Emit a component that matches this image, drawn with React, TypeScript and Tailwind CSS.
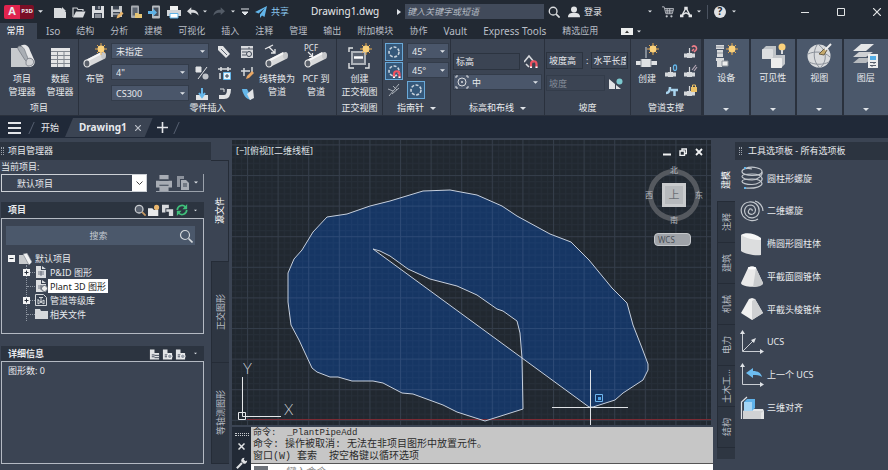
import type { ReactNode } from "react";

type IconProps = { className?: string; box?: string; children: ReactNode };

function Icon({ className = "size-3.5", box = "0 0 14 14", children }: IconProps) {
  return (
    <svg viewBox={box} className={`shrink-0 ${className}`} fill="none" aria-hidden="true">
      {children}
    </svg>
  );
}

function Caret({ className = "w-1.5" }: { className?: string }) {
  return (
    <svg viewBox="0 0 6 3" className={`h-[3px] shrink-0 ${className}`} aria-hidden="true">
      <path d="M0 0h6L3 3z" fill="#dfe3e8" />
    </svg>
  );
}

function Sun() {
  return (
    <g>
      <path
        d="M20 0v12M14 6h12M16 2l8 8M24 2l-8 8"
        stroke="#e8a94c"
        strokeWidth="1"
      />
      <circle cx="20" cy="6" r="3.4" fill="#fbd27c" />
    </g>
  );
}

function Pipe() {
  return (
    <g>
      <path d="M7 20L22 12.500" stroke="#d9dadb" strokeWidth="7" />
      <path d="M6 17.500L20.500 10" stroke="#f6f6f6" strokeWidth="2" />
      <ellipse cx="22.500" cy="12.500" rx="2.500" ry="3.500" fill="#c4c6c9" />
      <ellipse cx="6" cy="20.500" rx="3" ry="3.500" fill="#5a606a" stroke="#e6e6e6" strokeWidth="1.2" />
    </g>
  );
}

/* ---------- title bar ---------- */

const quickActions: { label: string; art: ReactNode }[] = [
  { label: "新建", art: <path d="M1 3h7l5 4v6H1zM9 2l4 4H9z" fill="#d8dadd" /> },
  {
    label: "打开",
    art: (
      <>
        <path d="M1 12V3h4l1 1.500h5V6" stroke="#cfd2d6" strokeWidth="1.200" />
        <path d="M1 12.500L4 6.500h9.500L11 12.500z" fill="#d8dadd" />
      </>
    ),
  },
  {
    label: "保存",
    art: (
      <>
        <path d="M1 1h12v12H1z" fill="#dcdee1" />
        <path d="M4 1h6v4H4zM3 8h8v5H3z" fill="#3b4350" />
        <path d="M4 10h6M4 12h6M8 1v3" stroke="#dcdee1" />
      </>
    ),
  },
  {
    label: "另存为",
    art: (
      <>
        <path d="M1 1h11v11H1z" fill="#c4c7cb" />
        <path d="M3 1h6v3.500H3zM3 7h7v5H3z" fill="#3b4350" />
        <path d="M3 9h6" stroke="#dcdee1" />
        <path d="M6.500 13.500l1-3 4-4 2 2-4 4z" fill="#e9b66d" />
      </>
    ),
  },
  {
    label: "从移动设备打开",
    art: (
      <>
        <rect x="2" y="0.500" width="8" height="12.500" rx="1" fill="#a9adb3" />
        <path d="M3.500 2.500h5v8h-5z" fill="#5c6470" />
        <path d="M6 13V8h3l1 1h3v4z" fill="#e6c574" />
      </>
    ),
  },
  {
    label: "保存到移动设备",
    art: (
      <>
        <rect x="4" y="0.500" width="8" height="13" rx="1" fill="#b9bdc2" />
        <path d="M5.500 2.500h5v8.500h-5z" fill="#47505e" />
        <path d="M0 6h5V3.500L9 7.500l-4 4V9H0z" fill="#5fb2e6" />
      </>
    ),
  },
  {
    label: "打印",
    art: (
      <>
        <path d="M3 1h8v4H3z" fill="#f0f1f2" />
        <path d="M0 5h14v6H0z" fill="#d2d5d9" />
        <path d="M3 8.500h8V13H3z" fill="#fff" stroke="#5fb2e6" />
      </>
    ),
  },
];

function TitleBar() {
  return (
    <header className="flex h-[23px] shrink-0 items-center bg-[#222933]">
      <button aria-label="应用程序菜单" className="ml-1 flex h-3.5 w-[30px] shrink-0 items-center overflow-hidden rounded-xs bg-[#7b0f26]">
        <span className="flex h-full w-4 items-center justify-center bg-[#e0244e] text-[11px] font-bold">A</span>
        <span className="flex-1 text-[6px] font-bold">P3D</span>
      </button>
      <Caret className="ml-1 w-[5px]" />
      <div className="ml-2.5 flex items-center gap-[5px]">
        {quickActions.map((action) => (
          <button key={action.label} aria-label={action.label}>
            <Icon>{action.art}</Icon>
          </button>
        ))}
      </div>
      <button aria-label="放弃" className="ml-1.5">
        <Icon className="h-3.5 w-3">
          <path d="M0 6l5-4.500V4.500c5 0 8 2 8.500 7C11.500 8.500 9 8 5 8v2.500z" fill="#d8dadd" />
        </Icon>
      </button>
      <Caret className="ml-1 w-1" />
      <button aria-label="重做" className="ml-1.5">
        <Icon className="h-3.5 w-3">
          <path d="M14 6L9 1.500V4.500c-5 0-8 2-8.500 7C2.500 8.500 5 8 9 8v2.500z" fill="#535b66" />
        </Icon>
      </button>
      <Caret className="ml-1.5 w-1" />
      <button aria-label="自定义快速访问工具栏" className="ml-1.5">
        <Icon className="size-2" box="0 0 8 8">
          <path d="M0 1h8M1 4h6L4 7z" stroke="#dfe3e8" fill="#dfe3e8" />
        </Icon>
      </button>
      <button className="ml-1.5 flex items-center gap-1 text-[9px] text-[#8ac7ef]">
        <Icon className="size-3" box="0 0 12 12">
          <path d="M12 0L0 6l3.500 1.500L10 2 5 8.500V12l2-2.500 2.500 1.500z" fill="#62b5ea" />
        </Icon>
        共享
      </button>
      <h1 className="ml-[22px] text-[10px]">Drawing1.dwg</h1>
      <Icon className="ml-auto h-1.5 w-1" box="0 0 4 6">
        <path d="M0 0l4 3-4 3z" fill="#dfe3e8" />
      </Icon>
      <input
        aria-label="搜索"
        placeholder="键入关键字或短语"
        className="ml-1 h-[15px] w-[139px] bg-[#414a5a] px-0.5 text-[9px] italic placeholder:text-[#b4bac3]"
      />
      <button aria-label="查找" className="ml-1">
        <Icon className="size-3">
          <circle cx="6" cy="6" r="4.500" stroke="#d8dadd" strokeWidth="1.600" />
          <path d="M9.500 9.500L13.500 13.500" stroke="#d8dadd" strokeWidth="2" />
        </Icon>
      </button>
      <button className="ml-2 flex items-center gap-1 text-[9px]">
        <Icon className="size-3">
          <circle cx="7" cy="4" r="3.500" fill="#e2e4e6" />
          <path d="M0 13c0-4 3-5 7-5s7 1 7 5z" fill="#e2e4e6" />
        </Icon>
        登录
      </button>
      <Caret className="ml-[46px] w-1" />
      <button aria-label="应用商店" className="ml-2.5">
        <Icon className="size-3">
          <path d="M0 1h2.500l2 8h7.500l1.500-6H3.500M4 5h9M5 7h7M6 3v6M9 3v6" stroke="#c2c6cb" />
          <circle cx="5.500" cy="12" r="1.300" fill="#c2c6cb" />
          <circle cx="11" cy="12" r="1.300" fill="#c2c6cb" />
        </Icon>
      </button>
      <button aria-label="Autodesk" className="ml-1.5">
        <Icon className="size-3">
          <path d="M7 2L2 11.500M7 2l5 9.500M3 10l4-2 4 2" stroke="#e2e4e6" strokeWidth="1.600" />
          <path d="M5 1h4v3H5zM0 10h4v3H0zM10 10h4v3h-4z" fill="#e2e4e6" />
        </Icon>
      </button>
      <Caret className="ml-[5px] w-1" />
      <span className="mx-1.5 h-3.5 w-px bg-[#4a525f]" />
      <button aria-label="帮助" className="flex size-3 items-center justify-center rounded-full bg-[#dfe1e4] text-[10px] font-bold text-[#222933]">
        ?
      </button>
      <Caret className="ml-1.5 w-1" />
      <div className="ml-[65px] flex items-center gap-7 pr-[7px]">
        <button aria-label="最小化">
          <Icon className="size-2" box="0 0 8 8">
            <path d="M0 4.500h8" stroke="#e2e4e6" />
          </Icon>
        </button>
        <button aria-label="最大化">
          <Icon className="size-2" box="0 0 8 8">
            <path d="M.5.5h7v7h-7z" stroke="#e2e4e6" />
          </Icon>
        </button>
        <button aria-label="关闭">
          <Icon className="size-2" box="0 0 8 8">
            <path d="M0 0l8 8M8 0L0 8" stroke="#e2e4e6" strokeWidth="1.200" />
          </Icon>
        </button>
      </div>
    </header>
  );
}

/* ---------- ribbon ---------- */

const ribbonTabs = ["Iso", "结构", "分析", "建模", "可视化", "插入", "注释", "管理", "输出", "附加模块", "协作", "Vault", "Express Tools", "精选应用"];

function RibbonTabs() {
  return (
    <nav className="flex h-4 shrink-0 items-center gap-[15px] bg-[#222933] text-[#b9bec6]">
      <button className="h-full w-[37px] shrink-0 bg-[#3b4453] pr-1.5 text-[9px] text-white">常用</button>
      <div className="-ml-1.5 flex items-center gap-4 whitespace-nowrap text-[9px]">
        {ribbonTabs.map((tab) => (
          <button key={tab} className={/^[A-Z]/.test(tab) ? "text-[10px]" : ""}>
            {tab}
          </button>
        ))}
      </div>
      <button aria-label="最小化功能区" className="ml-2 flex items-center gap-1">
        <Icon className="h-[7px] w-3" box="0 0 12 7">
          <path d="M0 0h12v7H0z" fill="#eceded" />
          <path d="M4 5h4L6 2.500z" fill="#333" />
        </Icon>
        <Caret className="w-1" />
      </button>
    </nav>
  );
}

function Panel({ title, caret, className, children }: { title: string; caret?: boolean; className: string; children: ReactNode }) {
  return (
    <section className={`flex shrink-0 flex-col border-r border-[#2a313d] ${className}`}>
      <div className="flex h-[62px] pt-1">{children}</div>
      <h2 className="flex h-3.5 items-center justify-center gap-1.5 whitespace-nowrap text-[9px]">
        {title}
        {caret && <Caret />}
      </h2>
    </section>
  );
}

function BigButton({ lines, className, children }: { lines: string[]; className: string; children: ReactNode }) {
  return (
    <button className={`flex shrink-0 flex-col items-center whitespace-nowrap text-[9px] leading-[13px] ${className}`}>
      <Icon className="mb-[3px] h-[26px] w-7" box="0 0 28 26">
        {children}
      </Icon>
      {lines.map((line) => (
        <span key={line}>{line}</span>
      ))}
    </button>
  );
}

function Drop({ label, value, className, indent = "pl-1" }: { label: string; value: string; className: string; indent?: string }) {
  return (
    <span className={`relative block h-4 shrink-0 ${className}`}>
      <select aria-label={label} className={`block h-full w-full appearance-none border border-[#333c4a] bg-[#4a566a] text-[9px] leading-none ${indent}`}>
        <option>{value}</option>
      </select>
      <Caret className="pointer-events-none absolute top-[7px] right-1 w-[5px]" />
    </span>
  );
}

function Tool({ label, on, children }: { label: string; on?: boolean; children: ReactNode }) {
  return (
    <button
      aria-label={label}
      className={`flex size-[18px] shrink-0 items-center justify-center ${on ? "border border-[#6aa9d8] bg-[#35587a]" : ""}`}
    >
      <Icon>{children}</Icon>
    </button>
  );
}

function CompassRing() {
  return <circle cx="7" cy="7" r="5" stroke="#c9d3dd" strokeWidth="1.600" strokeDasharray="3 1.500" />;
}

function Magnet() {
  return (
    <g>
      <path d="M7 13.500V10a2.500 2.500 0 0 1 5.500 0v3.500" stroke="#ee5261" strokeWidth="2.200" />
      <path d="M6 12.500h2v1.500H6zM11.500 12.500h2v1.500h-2z" fill="#fff" />
    </g>
  );
}

function Support({ badge }: { badge: ReactNode }) {
  return (
    <g>
      <path d="M0 8.500h3V8h5v.5h3v4H8v.5H3v-.5H0z" fill="#d5d8db" />
      <path d="M5.500 8V3" stroke="#d5d8db" strokeWidth="1.200" />
      {badge}
    </g>
  );
}

function Ribbon() {
  return (
    <div className="flex h-[77px] shrink-0 overflow-hidden border-b border-[#2a313d] bg-[#3b4453]">
      <Panel title="项目" className="w-[79px]">
        <BigButton lines={["项目", "管理器"]} className="ml-0.5 w-10">
          <path d="M3 5h9l11 19H3z" fill="#c7cacd" />
          <path d="M13 2.500c5-2 8 1 9 5l4.500 10c1 4-2 6.500-5 6.500z" fill="#e6e7e8" />
          <path d="M12 3c5 1 5 6 7 10s1 7-2 4L10 6c-.5-2 0-3 2-3z" fill="#a9aeb4" stroke="#6e747d" strokeWidth=".7" />
          <path d="M18 19c0-4 5-5 7-2s-1 6-4 6-3-2-3-4z" fill="#d0d2d5" stroke="#6e747d" strokeWidth=".8" />
        </BigButton>
        <BigButton lines={["数据", "管理器"]} className="w-9">
          <path d="M5 5h19v19H5z" fill="#e4e5e6" />
          <path d="M5 8.500h19M5 12.500h19M5 16.500h19M5 20.500h19M11.500 8v16M18 8v16" stroke="#81878f" />
        </BigButton>
      </Panel>

      <Panel title="零件插入" className="w-[258px]">
        <BigButton lines={["布管"]} className="w-8">
          <Pipe />
          <Sun />
        </BigButton>
        <div className="flex flex-col gap-[3px]">
          <div className="flex gap-1.5">
            <Drop label="线号" value="未指定" className="w-[98px]" />
            <div className="flex gap-[5px]">
              <Tool label="标记">
                <path d="M1 1h5l7 8-4 4-8-8z" fill="#e1e3e5" />
                <path d="M4 4l6 6" stroke="#596270" />
              </Tool>
              <Tool label="线号表">
                <path d="M1 1h12v12H1z" fill="#d8dadd" />
                <path d="M1 4h12M2 7h5M2 10h4M9 2v2" stroke="#4a5260" />
                <circle cx="9" cy="9" r="2.500" stroke="#3b4453" />
              </Tool>
            </div>
          </div>
          <div className="flex gap-1">
            <Drop label="尺寸" value={'4"'} className="w-[78px]" />
            <div className="flex gap-[5px]">
              <Tool label="连接">
                <path d="M1 1h5v5H1zM12 1L3 13" fill="#e1e3e5" stroke="#e1e3e5" />
                <circle cx="10.500" cy="10.500" r="3" fill="#c0c4c9" />
              </Tool>
              <Tool label="装配">
                <path d="M0 3h13M3 1v4M10 1v4M2 7v6" stroke="#d8dadd" strokeWidth="1.600" />
                <path d="M5.500 6.500h7v7h-7z" fill="#e8f4fb" stroke="#65b7ea" />
                <path d="M9 8v4M7 10h4" stroke="#3b4453" />
              </Tool>
              <Tool label="编辑零件">
                <path d="M0 5h9M3 2v8M11 1v7" stroke="#d8dadd" strokeWidth="1.500" />
                <path d="M5 13l1-3 5-5 2 2-5 5z" fill="#e9a765" />
              </Tool>
            </div>
          </div>
          <div className="flex gap-1">
            <Drop label="等级库" value="CS300" className="w-[78px]" />
            <div className="flex gap-[5px]">
              <Tool label="支管">
                <path d="M1 8h12v5H1z" fill="#e1e3e5" />
                <path d="M7 1v8M4 6l3 4 3-4" stroke="#65b7ea" strokeWidth="2" />
              </Tool>
              <Tool label="弯头">
                <path d="M1 10h5c3 0 5-2 5-8" stroke="#e1e3e5" strokeWidth="4" />
                <path d="M2 2h4v3" stroke="#e1e3e5" />
              </Tool>
              <Tool label="斜接">
                <path d="M1 2h5l4 8v3C5 12 2 8 1 2z" fill="#65b7ea" />
                <path d="M6 7l6-5 1 9-4 2z" fill="#e1e3e5" />
              </Tool>
            </div>
          </div>
        </div>
        <BigButton lines={["线转换为", "管道"]} className="w-10">
          <Pipe />
          <path d="M2 6l8-4M6 4l6 6M12 6v4H8" stroke="#e5e6e8" strokeWidth="1.300" />
        </BigButton>
        <BigButton lines={["PCF 到", "管道"]} className="w-[38px]">
          <Pipe />
          <path d="M6 9l4 4M10.500 10v3.500H7" stroke="#e5e6e8" strokeWidth="1.200" />
          <text x="2" y="8" fontSize="8" fill="#e5e6e8">PCF</text>
        </BigButton>
      </Panel>

      <Panel title="正交视图" className="w-[46px]">
        <BigButton lines={["创建", "正交视图"]} className="w-[45px]">
          <path d="M3 9V5h4M3 20v5h5M19 25h4v-5" stroke="#e1e3e5" strokeWidth="1.400" />
          <path d="M5 8h15v14H5z" fill="#aeb3b9" />
          <path d="M7 10h11v10H7z" fill="#59616e" />
          <path d="M8 14.500h9" stroke="#fff" strokeWidth="2.500" />
          <Sun />
        </BigButton>
      </Panel>

      <Panel title="指南针" caret className="w-[68px]">
        <div className="flex flex-col gap-px pl-0.5">
          <div className="flex gap-1">
            <Tool label="切换指南针" on>
              <CompassRing />
            </Tool>
            <Drop label="指南针增量" value="45°" className="w-[42px]" />
          </div>
          <div className="flex gap-1">
            <Tool label="指南针捕捉" on>
              <CompassRing />
              <Magnet />
            </Tool>
            <Drop label="公差" value="45°" className="w-[42px]" />
          </div>
          <div className="flex gap-1">
            <Tool label="平面">
              <path d="M2 13L12 1M1 6l5 2M6 3l4 4M5 11l7-6" stroke="#aab0b8" />
            </Tool>
            <Tool label="旋转指南针" on>
              <CompassRing />
            </Tool>
          </div>
        </div>
      </Panel>

      <Panel title="标高和布线" caret className="w-[94px]">
        <div className="flex w-full flex-col gap-1 px-0.5 pt-[9px]">
          <div className="flex items-center justify-between pr-0.5">
            <input aria-label="标高" defaultValue="标高" className="h-[17px] w-[67px] border border-[#2c3440] bg-[#3b4453] px-0.5 text-[9px]" />
            <Tool label="标高捕捉">
              <path d="M0 8l5-6 5 6M2 10l3 3" stroke="#d8dadd" strokeWidth="1.600" />
              <Magnet />
            </Tool>
          </div>
          <div className="relative">
            <Drop label="布线对齐" value="中" className="w-[89px]" indent="pl-[18px]" />
            <Icon className="pointer-events-none absolute top-px left-0.5 size-3.5">
              <circle cx="7" cy="7" r="4" stroke="#d8dadd" />
              <path d="M1 3V1h2M11 1h2v2M13 11v2h-2M3 13H1v-2M7 6v2M6 7h2" stroke="#d8dadd" />
            </Icon>
          </div>
        </div>
      </Panel>

      <Panel title="坡度" className="w-[86px]">
        <div className="flex flex-col gap-[5px] pt-[9px] pl-px text-[9px]">
          <div className="flex items-center gap-[3px]">
            <input aria-label="坡度高" defaultValue="坡度高" className="h-[17px] w-[37px] border border-[#2c3440] bg-[#3b4453] px-0.5" />
            <span>:</span>
            <input aria-label="水平长度" defaultValue="水平长度" className="h-[17px] w-[37px] border border-[#2c3440] bg-[#3b4453] px-px" />
          </div>
          <div className="flex items-center gap-0.5">
            <input aria-label="坡度" disabled defaultValue="坡度" className="h-4 w-[59px] border border-[#333c4a] bg-[#3b4453] px-0.5 text-[#838b97]" />
            <Tool label="设置坡度">
              <path d="M0 3l6 5v5H0zM7 9l5 4H7z" fill="#e1e3e5" />
              <circle cx="10.500" cy="5.500" r="3" fill="#7cc9cf" />
            </Tool>
          </div>
        </div>
      </Panel>

      <Panel title="管道支撑" className="w-[71px]">
        <BigButton lines={["创建"]} className="w-8">
          <path d="M13 15V4" stroke="#9da3ab" strokeWidth="1.500" />
          <path d="M3 18h5v-2h10v2h6v4h-6v2H8v-2H3z" fill="#dfe1e3" />
          <path d="M8 16v8M18 16v8" stroke="#868c95" />
          <Sun />
        </BigButton>
        <div className="grid grid-cols-2 content-start gap-px">
          <span />
          <Tool label="附着">
            <Support badge={<path d="M8 2a2.500 2.500 0 0 1 4 3l-2 2M8 6l2-2" stroke="#ee7f8a" strokeWidth="1.600" />} />
          </Tool>
          <Tool label="添加">
            <Support badge={<rect x="8.500" y="1" width="3" height="5.500" rx="1.500" stroke="#65b7ea" strokeWidth="1.300" />} />
          </Tool>
          <Tool label="分离">
            <Support badge={<path d="M8 6l4-5M10 7l3-4" stroke="#b5a8b6" strokeWidth="1.200" />} />
          </Tool>
          <Tool label="转换">
            <path d="M1 10c3 0 4-2 4-6M6 7h7M9.500 7v6" stroke="#a9d4ee" strokeWidth="2.500" />
          </Tool>
          <Tool label="锁定">
            <Support
              badge={
                <>
                  <path d="M7 4h6v5H7z" fill="#eec266" />
                  <path d="M8.500 4V2h3v2" stroke="#eec266" />
                </>
              }
            />
          </Tool>
        </div>
      </Panel>

      <div className="flex flex-1 gap-0.5 bg-[#2a313d] pl-0.5">
        <Collapsed label="设备">
          <path d="M4 2h8v4H4zM5 7h6v7H5zM4 15h8v3H4zM5 18h5v6H5z" fill="#d9dbdd" />
          <path d="M10 18h6v5h-6zM4 4h8M5 10h6" fill="#eee" stroke="#8d939b" />
          <Sun />
        </Collapsed>
        <Collapsed label="可见性">
          <path d="M3 7l4-4h10v9l-4 4H3z" fill="#bfc3c7" />
          <rect x="3" y="6" width="11" height="10" rx="1" fill="#dcdee0" />
          <path d="M12 16l4-4h10v9l-4 4H12z" fill="#c3c6ca" />
          <rect x="12" y="15" width="11" height="10" rx="1" fill="#ececec" />
          <circle cx="23" cy="4" r="3.500" fill="#fbd27c" />
          <path d="M22 7h2v4h-2z" fill="#d9dbdd" />
        </Collapsed>
        <Collapsed label="视图">
          <circle cx="14" cy="13" r="11.500" fill="#d9dbdd" />
          <path d="M3 11c6-3 16-3 22 3M4 19c6 3 14 3 20 0M12 2c-4 6-4 16 2 22M14 2c8 6 8 16 2 22" stroke="#8b919a" />
          <path d="M14 11l5-5 3 1-3 5z" fill="#c4a96c" stroke="#6b6048" />
          <path d="M20 7l6-6" stroke="#eee" strokeWidth="2" />
        </Collapsed>
        <Collapsed label="图层">
          <path d="M1 8L9 1h13l-8 7z" fill="#e5e6e7" />
          <path d="M1 14l6-5h14l-7 5z" fill="#cfd1d4" />
          <path d="M1 20l6-5h14l-7 5z" fill="#b7bbbf" />
          <path d="M16 11h10v14H16z" fill="#eceded" />
          <path d="M18 13h6v4h-6z" fill="#55aee6" />
          <path d="M18 19.500h6M18 22.500h6M22 19v2M20 22v2" stroke="#59616e" />
        </Collapsed>
      </div>
    </div>
  );
}

function Collapsed({ label, children }: { label: string; children: ReactNode }) {
  return (
    <button className="flex flex-1 flex-col items-center bg-[#4b586b] pt-1 pb-1 text-[9px] leading-[13px]">
      <Icon className="mb-0.5 h-[26px] w-7" box="0 0 28 26">
        {children}
      </Icon>
      {label}
      <Caret className="mt-auto w-1.5" />
    </button>
  );
}

/* ---------- document tabs ---------- */

function DocumentTabs() {
  return (
    <div className="flex h-[22px] shrink-0 items-center bg-[#202938] pt-0.5 pb-px">
      <button aria-label="菜单" className="ml-2 flex w-[13px] flex-col gap-[3px]">
        <span className="h-0.5 bg-[#e4e6e9]" />
        <span className="h-0.5 bg-[#e4e6e9]" />
        <span className="h-0.5 bg-[#e4e6e9]" />
      </button>
      <span className="ml-2.5 h-3 w-px -skew-x-[24deg] bg-[#566071]" />
      <button className="ml-[9px] text-[9px]">开始</button>
      <div className="ml-1.5 flex h-full items-center gap-2 bg-[#3b4453] pr-3 pl-3.5 [clip-path:polygon(8px_0,100%_0,calc(100%-8px)_100%,0_100%)]">
        <button className="text-[10px] font-bold">Drawing1</button>
        <button aria-label="关闭 Drawing1">
          <Icon className="size-1.5" box="0 0 6 6">
            <path d="M0 0l6 6M6 0L0 6" stroke="#b9bec6" strokeWidth="1.200" />
          </Icon>
        </button>
      </div>
      <button aria-label="新图形" className="ml-1">
        <Icon className="size-[11px]" box="0 0 11 11">
          <path d="M5.500 0v11M0 5.500h11" stroke="#e4e6e9" strokeWidth="1.600" />
        </Icon>
      </button>
      <span className="ml-2 h-3 w-px -skew-x-[24deg] bg-[#566071]" />
    </div>
  );
}

/* ---------- project manager ---------- */

function Grip() {
  return <span className="h-2 w-[3px] border-x border-dotted border-[#9aa1ab]" />;
}

function SideTab({ label, on, className = "" }: { label: string; on?: boolean; className?: string }) {
  return (
    <button
      className={`flex w-full items-center justify-center border-b border-[#252c37] text-[9px] ${on ? "bg-[#3b4453] text-white" : "border-l bg-[#2e3642] text-[#b9bec6]"} ${className}`}
    >
      <span className="rotate-180 whitespace-nowrap [text-orientation:sideways] [writing-mode:vertical-rl]">{label}</span>
    </button>
  );
}

const treeRows: { label: string; kind: "doc" | "model" | "spec" | "folder"; plus?: boolean; on?: boolean }[] = [
  { label: "P&ID 图形", kind: "doc", plus: true },
  { label: "Plant 3D 图形", kind: "model", on: true },
  { label: "管道等级库", kind: "spec", plus: true },
  { label: "相关文件", kind: "folder" },
];

function TreeIcon({ kind }: { kind: string }) {
  if (kind === "folder") {
    return (
      <Icon className="h-3 w-[13px]" box="0 0 13 12">
        <path d="M0 1h5l1 2h7v8H0z" fill="#d5d8db" />
      </Icon>
    );
  }
  if (kind === "spec") {
    return (
      <Icon className="h-3 w-[13px]" box="0 0 13 12">
        <path d="M.5.5h8l3 3v8H.5z" stroke="#d5d8db" />
        <path d="M3 5v5l6-4v4L3 6M4 3.500h4M6 4v4" stroke="#d5d8db" />
      </Icon>
    );
  }
  return (
    <Icon className="h-3 w-[13px]" box="0 0 13 12">
      <path d="M1 0h5v4h5v8H1zM7 0l4 3H7z" fill="#dcdee1" />
      <path d="M3 6h6M3 8h6M6 5v5" stroke="#59616e" strokeWidth=".8" />
      {kind === "model" && <circle cx="9.500" cy="8.500" r="3" fill="#eceded" stroke="#59616e" />}
    </Icon>
  );
}

function Expander({ open }: { open?: boolean }) {
  return (
    <Icon className="size-[7px]" box="0 0 7 7">
      <path d="M0 0h7v7H0z" fill="#f2f3f4" />
      <path d={open ? "M1.500 3.500h4" : "M1.500 3.500h4M3.500 1.500v4"} stroke="#2a313d" />
    </Icon>
  );
}

function ProjectManager() {
  return (
    <aside className="flex w-[232px] shrink-0 pt-0.5 pb-1.5">
      <div className="flex min-w-0 flex-1 flex-col">
        <h2 className="flex h-[18px] shrink-0 items-center gap-1 bg-[#2c3440] pl-px text-[9px]">
          <Grip />
          项目管理器
        </h2>
        <div className="flex flex-1 flex-col pr-[7px] pl-px">
          <label htmlFor="project" className="text-[9px] leading-[13px]">
            当前项目:
          </label>
          <div className="mt-px flex items-center justify-between">
            <span className="relative block h-[18px] w-[146px] border border-[#cdd1d6]">
              <select id="project" className="block h-full w-full appearance-none pl-[15px] text-[9px] leading-none">
                <option>默认项目</option>
              </select>
              <span className="pointer-events-none absolute inset-y-0 right-0 flex w-3.5 items-center justify-center bg-white">
                <Icon className="h-1 w-[7px]" box="0 0 7 4">
                  <path d="M.5.5l3 3 3-3" stroke="#444" />
                </Icon>
              </span>
            </span>
            <span className="flex h-[18px] items-center gap-1 border-r border-b border-[#9aa1ab] pr-[5px]">
              <button aria-label="打印">
                <Icon className="size-4">
                  <path d="M3 0h8v4H3zM0 5h14v6H0zM3 9h8v5H3z" fill="#a7acb4" />
                  <path d="M3 4.500h8M3 9h8" stroke="#3b4453" />
                </Icon>
              </button>
              <button aria-label="发布">
                <Icon className="size-3.5">
                  <path d="M1 0h7v3H4v8H1z" fill="#8d939d" />
                  <path d="M5 4h5l3 3v7H5z" fill="#a7acb4" />
                  <path d="M7 8h4M7 10h4" stroke="#3b4453" />
                </Icon>
              </button>
              <Caret className="w-1" />
            </span>
          </div>

          <div className="mt-2.5 flex h-4 items-center gap-0.5 bg-[#2c3440] px-[7px] text-[9px] font-bold">
            <h3 className="flex-1">项目</h3>
            <button aria-label="查找">
              <Icon className="size-3">
                <circle cx="6" cy="6" r="4.500" stroke="#c9ccd0" strokeWidth="1.500" fill="#59616e" />
                <path d="M9.500 9.500l4 4" stroke="#c99a62" strokeWidth="2" />
              </Icon>
            </button>
            <button aria-label="新建图形">
              <Icon className="size-3">
                <path d="M0 5h5l2 2h5v7H0z" fill="#e8e9ea" />
                <circle cx="10" cy="4" r="3" fill="#e9b66d" />
              </Icon>
            </button>
            <button aria-label="复制">
              <Icon className="size-3">
                <path d="M0 1h8v4H4v5H0zM5 6h8v8H8V9H5z" fill="#d8dadd" />
              </Icon>
            </button>
            <button aria-label="刷新">
              <Icon className="size-3">
                <path d="M1.500 7a5.500 5.500 0 0 1 9.500-3.500M12.500 7A5.500 5.500 0 0 1 3 10.500" stroke="#3fc07a" strokeWidth="2" />
                <path d="M13 0v6H7.500zM1 14V8h5.500z" fill="#3fc07a" />
              </Icon>
            </button>
            <Caret className="ml-1 w-[3px]" />
          </div>

          <div className="flex h-[116px] flex-col border border-[#b4bac3] px-1">
            <div className="mt-[7px] flex h-[19px] w-[189px] items-center bg-[#4b586b] pr-0.5">
              <input aria-label="搜索项目" placeholder="搜索" className="min-w-0 flex-1 pl-3 text-center text-[9px] placeholder:text-[#c3c9d1]" />
              <Icon>
                <circle cx="6" cy="6" r="4.500" stroke="#d5d8db" strokeWidth="1.200" />
                <path d="M9.500 9.500l4 4" stroke="#d5d8db" strokeWidth="1.600" />
              </Icon>
            </div>
            <div className="mt-[7px] flex h-[13px] items-center gap-[3px] pl-0.5 text-[9px]">
              <Expander open />
              <Icon className="h-3 w-3.5" box="0 0 14 12">
                <path d="M1 2h6l6 9H1z" fill="#c7cacd" />
                <path d="M5 1l4-1 5 9-3 3z" fill="#f0f1f2" stroke="#767c86" strokeWidth=".6" />
              </Icon>
              默认项目
            </div>
            <ul className="ml-5 border-l border-dotted border-[#8e96a1] text-[9px]">
              {treeRows.map((row) => (
                <li key={row.label} className="flex h-3.5 items-center">
                  <span className="-ml-1 flex w-3 shrink-0 items-center">
                    {row.plus ? <Expander /> : <span className="ml-1" />}
                    <span className="flex-1 border-t border-dotted border-[#8e96a1]" />
                  </span>
                  <TreeIcon kind={row.kind} />
                  <button className={`h-3.5 px-0.5 leading-none whitespace-nowrap ${row.on ? "bg-white text-[#222]" : ""}`}>{row.label}</button>
                </li>
              ))}
            </ul>
          </div>

          <div className="mt-3 flex h-[15px] items-center gap-0.5 bg-[#2c3440] px-[7px] text-[9px] font-bold">
            <h3 className="flex-1">详细信息</h3>
            {["详细信息", "预览", "历史记录"].map((label) => (
              <button key={label} aria-label={label}>
                <Icon className="h-3 w-[11px]" box="0 0 12 12">
                  <path d="M1 1h5v4h5v7H1z" fill="#e1e3e5" />
                  <path d="M3 7h3M3 9h3" stroke="#3b4453" />
                  {label === "详细信息" ? <path d="M6 7.500h5M6 10h6" stroke="#3b4453" /> : <circle cx="8.500" cy="8.500" r="2.500" fill="#9aa1ab" stroke="#fff" />}
                </Icon>
              </button>
            ))}
            <Caret className="ml-1.5 w-[3px]" />
          </div>
          <div className="flex-1 border border-[#b4bac3] px-1.5 py-0.5 text-[9px]">图形数: 0</div>
        </div>
      </div>
      <div className="mr-[3px] flex w-[18px] flex-col pt-[18px]">
        <SideTab label="源文件" on className="flex-1 border-t border-r" />
        <SideTab label="正交图形" className="flex-1" />
        <SideTab label="等轴测图形" className="flex-1" />
      </div>
    </aside>
  );
}

/* ---------- model space ---------- */

const lasso =
  "M373 249 380 251 390 256 408 269 430 279 457 286 477 295 497 309 503 311 517 321 520 333 522 358 523 409 485 421 " +
  "457 412 443 405 413 394 402 393 383 383 373 381 352 381 338 377 330 377 317 372 312 368 299 340 291 325 288 302 288 273 " +
  "294 259 302 250 313 232 327 217 347 214 370 206 390 201 423 191 450 190 477 195 502 206 517 216 550 234 571 242 589 260 " +
  "612 288 627 303 633 325 642 348 648 364 648 370 643 380 623 393 615 400 593 407 589 407Z";

function ModelSpace() {
  return (
    <div className="relative min-h-0 flex-1 overflow-hidden bg-[#212830]">
      <svg viewBox="232 140 479 285" preserveAspectRatio="xMinYMin slice" className="absolute inset-0 h-full w-full" fill="none" role="img" aria-label="模型空间">
        <defs>
          <pattern id="minor" x="247" y="175" width="6.120" height="6.120" patternUnits="userSpaceOnUse">
            <path d="M.5 0v6.120M0 .5h6.120" stroke="#8ea4c4" strokeOpacity=".05" />
          </pattern>
          <pattern id="major" x="247" y="175" width="30.600" height="30.600" patternUnits="userSpaceOnUse">
            <path d="M.5 0v30.600M0 .5h30.600" stroke="#9fb3cf" strokeOpacity=".12" />
          </pattern>
        </defs>
        <path d={lasso} fill="#163664" fillRule="evenodd" />
        <rect x="232" y="139" width="479" height="290" fill="url(#minor)" />
        <rect x="232" y="139" width="479" height="290" fill="url(#major)" />
        <path d="M247 419.500H711" stroke="#7a2a33" />
        <path d={lasso} stroke="#c6cfdd" />
        <path d="M590.500 370v55M552 407.500h76" stroke="#dfe2e6" />
        <path d="M595.500 394.500h7v7h-7z" fill="#163664" stroke="#6fb6ee" />
        <path d="M598 397h3v3h-3z" fill="#4fa3e6" />
        <path d="M242.500 377v39.500H281M238.500 412.500h7v7h-7z" stroke="#e6e8ea" />
        <g fill="#c9ced5" fontFamily="Lato" fontWeight="300" fontSize="15">
          <text x="243" y="374">Y</text>
          <text x="284" y="415">X</text>
        </g>
      </svg>
      <p className="absolute top-1 left-1 text-[9px] text-[#dfe2e6]">[−][俯视][二维线框]</p>
      <div className="absolute top-2 right-2 flex items-center gap-2">
        <button aria-label="最小化视口">
          <Icon className="size-2" box="0 0 8 8">
            <path d="M0 6.500h8" stroke="#f0f1f2" strokeWidth="2" />
          </Icon>
        </button>
        <button aria-label="还原视口">
          <Icon className="size-2" box="0 0 8 8">
            <path d="M1 3h4.500v4.500H1zM3 3V1h4.500v4.500H6" stroke="#f0f1f2" strokeWidth="1.400" />
          </Icon>
        </button>
        <button aria-label="关闭视口">
          <Icon className="size-2" box="0 0 8 8">
            <path d="M1 1l6 6M7 1L1 7" stroke="#f0f1f2" strokeWidth="1.800" />
          </Icon>
        </button>
      </div>
      <svg viewBox="0 0 60 62" className="absolute top-6 right-[7px] h-[62px] w-[60px]" fill="none" aria-label="ViewCube">
        <circle cx="30" cy="31" r="23.500" stroke="#55595f" strokeWidth="5" />
        <path d="M18 19h24v24H18z" fill="#c9cbcd" />
        <path d="M21 22h18v18H21z" fill="#b7babd" />
        <g fill="#b5b9bf" fontSize="8" textAnchor="middle">
          <text x="30" y="9">北</text>
          <text x="30" y="59">南</text>
          <text x="5" y="34">西</text>
          <text x="55" y="34">东</text>
          <text x="30" y="35" fontSize="11" fill="#6b6f75">上</text>
        </g>
      </svg>
      <button className="absolute top-[93px] right-5 h-[13px] w-[37px] rounded-sm border border-[#c5c8cc] bg-[#9fa3a9] pl-[3px] text-left text-[8px] leading-none text-[#4b5058]">
        WCS
      </button>
    </div>
  );
}

function CommandLine() {
  return (
    <div className="flex h-[43px] shrink-0 overflow-hidden bg-[#222a36]">
      <div className="flex w-[19px] shrink-0 flex-col items-center gap-[7px] pt-1.5">
        <span className="h-[3px] w-3.5 border-y border-dotted border-[#c9ccd0]" />
        <button aria-label="关闭命令行">
          <Icon className="size-[7px]" box="0 0 7 7">
            <path d="M.5.5l6 6M6.500.5l-6 6" stroke="#e1e3e5" strokeWidth="1.500" />
          </Icon>
        </button>
        <button aria-label="自定义">
          <Icon className="size-3">
            <path d="M1 13l6-6" stroke="#e1e3e5" strokeWidth="2.500" />
            <path d="M13 4l-2 1-2-2 1-2c-3 0-4 2-4 4l3 3c3 0 4-2 4-4z" fill="#e1e3e5" />
          </Icon>
        </button>
      </div>
      <div className="min-w-0 flex-1">
        <div className="h-[37px] border-b border-[#555] bg-[#c6c6c6] pl-0.5 font-['Liberation_Mono','Noto_Sans_CJK_SC',monospace] text-[10px] leading-3 whitespace-pre text-[#2b2b2b]">
          <p className="text-[9px]">命令:  _PlantPipeAdd</p>
          <p>命令: 操作被取消: 无法在非项目图形中放置元件。</p>
          <p>窗口(W) 套索  按空格键以循环选项</p>
        </div>
        <div className="flex h-3.5 items-center gap-[17px] bg-white pl-[3px]">
          <Icon className="h-2.5 w-3.5" box="0 0 14 10">
            <path d="M0 0h14v10H0z" fill="#6d7279" />
            <path d="M2 4l2 2-2 2M6 8h4" stroke="#fff" />
          </Icon>
          <input aria-label="命令" placeholder="键入命令" className="flex-1 text-[10px] italic placeholder:text-[#8a8a8a]" />
        </div>
      </div>
    </div>
  );
}

/* ---------- tool palettes ---------- */

const palette: { label: string; art: ReactNode }[] = [
  {
    label: "圆柱形螺旋",
    art: (
      <>
        <g stroke="#c3c8ce" strokeWidth="1.200">
          <path d="M5 2.500c8-3 17 0 17 3s-5 4-10 4-10-1.500-10-4 5-4 10-2.500" />
          <path d="M22 6c1 3-4 8-10 8S2 12 2 10.500 6 8 12 8s10 2 10 4.500" />
          <path d="M22 12c1 3-4 6.500-10 6.500S2 17 2 15.500 6 13 12 13s10 2 10 4.500-6 5.500-17 4.500" />
        </g>
        <path d="M4 1h2v2H4zM4 21h2v2H4z" fill="#62b5ea" />
      </>
    ),
  },
  {
    label: "二维螺旋",
    art: (
      <path
        d="M12 12c1-2-2-3-3-1-2 3 1 5 4 4 4-2 3-8-2-9-6 0-8 6-5 10 4 5 12 3 13-3 1-7-5-11-10-10C2 4-1 11 3 17c4 5 11 6 15 3M15 2c4 1 8 5 8 10"
        stroke="#c3c8ce"
        strokeWidth="1.200"
      />
    ),
  },
  {
    label: "椭圆形圆柱体",
    art: (
      <>
        <path d="M1 3v16c4 3 14 5 20 4V6z" fill="#dcddde" />
        <path d="M1 3c4-3 14-2 20 3v2C14 8 5 6 1 3z" fill="#f7f7f7" />
      </>
    ),
  },
  {
    label: "平截面圆锥体",
    art: (
      <>
        <path d="M8 3c1-2 7-2 8 0l7 15c-1 5-21 5-22 0z" fill="#e9e9e9" />
        <path d="M16 3l7 15c0 3-6 4-10 4z" fill="#c9cbcd" />
        <ellipse cx="12" cy="3" rx="4" ry="1.500" fill="#fff" />
      </>
    ),
  },
  {
    label: "平截头棱锥体",
    art: (
      <>
        <path d="M9 2l3-1 3 1 8 14-11 7L1 16z" fill="#f0f0f0" />
        <path d="M15 2l8 14-11 7V4z" fill="#cfd0d2" />
      </>
    ),
  },
  {
    label: "UCS",
    art: (
      <>
        <path d="M2.500 2v19.500H22M3 21L14 10" stroke="#c9cdd3" />
        <path d="M0 4l2.500-4L5 4zM20 19l4 2.500-4 2.500zM16 8l-2 5-3-3z" fill="#dfe2e6" />
      </>
    ),
  },
  {
    label: "上一个 UCS",
    art: (
      <>
        <path d="M2.500 2v19.500H22" stroke="#c9cdd3" />
        <path d="M0 4l2.500-4L5 4zM20 19l4 2.500-4 2.500z" fill="#dfe2e6" />
        <path d="M6 10l7-5v3c5 0 8 2 9 6-3-2-5-2-9-2v3z" fill="#6cbcf0" />
      </>
    ),
  },
  {
    label: "三维对齐",
    art: (
      <>
        <path d="M1.500 23V6L7 1" stroke="#dfe2e6" strokeWidth="1.200" />
        <path d="M3 15l3-2h17l1 2v8H3z" fill="#e4e5e6" />
        <path d="M3 15h21l-3 2v6H3z" fill="#d0d2d4" />
        <path d="M4 6l3-3h8v9l-3 3H4z" fill="#5fb2ea" />
        <path d="M4 6h8v9H4z" fill="#a4d5f5" />
      </>
    ),
  },
];

function ToolPalettes() {
  return (
    <aside className="flex w-[171px] shrink-0 pt-0.5">
      <div className="flex w-[18px] flex-col pt-[18px] pb-[11px]">
        <SideTab label="建模" on className="h-[42px]" />
        {["注释", "建筑", "机械", "电力", "土木工...", "结构"].map((label) => (
          <SideTab key={label} label={label} className="h-[41px]" />
        ))}
        <div className="flex-1 bg-[#2e3642]" />
      </div>
      <div className="flex flex-1 flex-col">
        <h2 className="flex h-[18px] shrink-0 items-center gap-1.5 bg-[#2c3440] pl-1 text-[9px]">
          <Grip />
          工具选项板 - 所有选项板
        </h2>
        <ul className="flex h-[264px] flex-col pt-0.5 pl-[5px]">
          {palette.map((item) => (
            <li key={item.label} className="flex flex-1 items-center">
              <button className="flex items-center gap-[3px] text-[9px]">
                <Icon className="size-6" box="0 0 24 24">
                  {item.art}
                </Icon>
                {item.label}
              </button>
            </li>
          ))}
        </ul>
      </div>
    </aside>
  );
}

export default function App() {
  return (
    <div className="flex h-screen flex-col overflow-hidden bg-[#3b4453] font-['Noto_Sans','Noto_Sans_CJK_SC',sans-serif] text-[#e8eaed]">
      <TitleBar />
      <RibbonTabs />
      <Ribbon />
      <DocumentTabs />
      <div className="flex min-h-0 flex-1 border-t-2 border-[#3b4453]">
        <ProjectManager />
        <main className="flex min-w-0 flex-1 flex-col">
          <div className="flex min-h-0 flex-1 pr-1.5 pb-0.5">
            <ModelSpace />
          </div>
          <div className="pr-1">
            <CommandLine />
          </div>
        </main>
        <ToolPalettes />
      </div>
    </div>
  );
}
